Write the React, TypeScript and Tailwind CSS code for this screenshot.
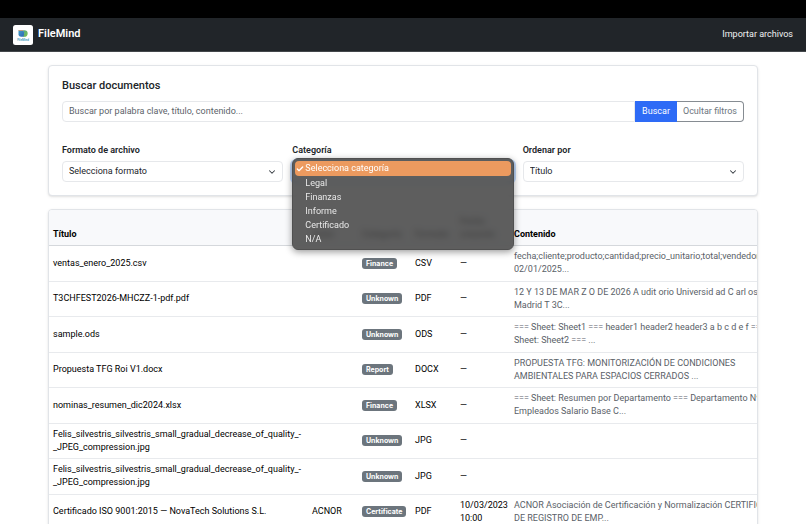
import React, { useState } from 'react';
import { Check, ChevronDown } from 'lucide-react';

const categories = ['Selecciona categoría', 'Legal', 'Finanzas', 'Informe', 'Certificado', 'N/A'];

const documents = [
  {
    title: 'ventas_enero_2025.csv',
    author: '',
    category: 'Finance',
    format: 'CSV',
    date: '—',
    content: 'fecha;cliente;producto;cantidad;precio_unitario;total;vendedor\n02/01/2025...',
  },
  {
    title: 'T3CHFEST2026-MHCZZ-1-pdf.pdf',
    author: '',
    category: 'Unknown',
    format: 'PDF',
    date: '—',
    content: '12 Y 13 DE MAR Z O DE 2026 A udit orio Universid ad C arl os\nMadrid T 3C...',
  },
  {
    title: 'sample.ods',
    author: '',
    category: 'Unknown',
    format: 'ODS',
    date: '—',
    content: '=== Sheet: Sheet1 === header1 header2 header3 a b c d e f ===\nSheet: Sheet2 === ...',
  },
  {
    title: 'Propuesta TFG Roi V1.docx',
    author: '',
    category: 'Report',
    format: 'DOCX',
    date: '—',
    content: 'PROPUESTA TFG: MONITORIZACIÓN DE CONDICIONES\nAMBIENTALES PARA ESPACIOS CERRADOS ...',
  },
  {
    title: 'nominas_resumen_dic2024.xlsx',
    author: '',
    category: 'Finance',
    format: 'XLSX',
    date: '—',
    content: '=== Sheet: Resumen por Departamento === Departamento Nº\nEmpleados Salario Base C...',
  },
  {
    title: 'Felis_silvestris_silvestris_small_gradual_decrease_of_quality_-_JPEG_compression.jpg',
    author: '',
    category: 'Unknown',
    format: 'JPG',
    date: '—',
    content: '',
  },
  {
    title: 'Felis_silvestris_silvestris_small_gradual_decrease_of_quality_-_JPEG_compression.jpg',
    author: '',
    category: 'Unknown',
    format: 'JPG',
    date: '—',
    content: '',
  },
  {
    title: 'Certificado ISO 9001:2015 — NovaTech Solutions S.L.',
    author: 'ACNOR',
    category: 'Certificate',
    format: 'PDF',
    date: '10/03/2023 10:00',
    content: 'ACNOR Asociación de Certificación y Normalización CERTIFICADO\nDE REGISTRO DE EMP...',
  },
];

function Logo() {
  return (
    <svg viewBox="0 0 20 20" className="h-5 w-5" aria-hidden="true">
      <defs>
        <linearGradient id="page" x1="0" y1="0" x2="1" y2="1">
          <stop offset="0" stopColor="#3f9fc4" />
          <stop offset="1" stopColor="#2f62b8" />
        </linearGradient>
        <linearGradient id="leaf" x1="0" y1="0" x2="1" y2="1">
          <stop offset="0" stopColor="#4fa98a" />
          <stop offset="1" stopColor="#7fc04a" />
        </linearGradient>
      </defs>
      <rect width="20" height="20" rx="2.5" fill="#fff" />
      <path d="M5.5 5.2h4.3l1.6 1.5v5.1H8.2c-1.8 0-2.7-1-2.7-2.5z" fill="url(#page)" />
      <path d="M9.8 5.2h1.6c2.1 0 3.3 1.2 3.3 3.2s-1.2 3.4-3.3 3.4H9.9c.9-.8 1.2-1.8 1.2-3.2 0-1.5-.4-2.5-1.3-3.4z" fill="url(#leaf)" />
      <path d="M5.5 5.2h4.3l.8.8H5.5z" fill="#e09a6a" />
      <text x="10" y="15.6" textAnchor="middle" fontSize="3" fontWeight="700" fill="#4a9ec0">
        FileMind
      </text>
    </svg>
  );
}

function SelectField({ id, label, options }: { id: string; label: string; options: string[] }) {
  return (
    <div className="flex flex-col gap-1">
      <label htmlFor={id} className="font-semibold leading-[14px]">
        {label}
      </label>
      <div className="relative flex items-center">
        <select
          id={id}
          className="h-[21px] w-full appearance-none rounded-[4px] border border-[#e6e8eb] bg-white px-1.5 text-[#212529]"
        >
          {options.map((option) => (
            <option key={option}>{option}</option>
          ))}
        </select>
        <ChevronDown className="pointer-events-none absolute right-1.5 h-2.5 w-2.5 text-[#343a40]" strokeWidth={2.5} />
      </div>
    </div>
  );
}

function CategoryField() {
  const [open, setOpen] = useState(true);
  const [selected, setSelected] = useState(categories[0]);

  return (
    <div className="relative flex flex-col gap-1">
      <label htmlFor="category" className="font-semibold leading-[14px]">
        Categoría
      </label>
      <button
        id="category"
        type="button"
        aria-haspopup="listbox"
        aria-expanded={open}
        onClick={() => setOpen(!open)}
        className="flex h-[21px] items-center justify-between rounded-[4px] border border-[#86b7fe] px-1.5 ring-2 ring-[#c2dbfe]"
      >
        {open ? '' : selected}
      </button>
      {open && (
        <ul
          role="listbox"
          aria-label="Categoría"
          className="absolute inset-x-0 top-[15px] z-10 rounded-[6px] border border-[#505050] bg-[#4c4c4c]/90 p-0.5 text-[#e8e8e8] shadow-[0_2px_7px_rgba(0,0,0,0.4)] backdrop-blur-[3px]"
        >
          {categories.map((category) => (
            <li
              key={category}
              role="option"
              aria-selected={category === selected}
              onClick={() => {
                setSelected(category);
                setOpen(false);
              }}
              className="flex h-[14px] cursor-default items-center rounded-[4px] first:mb-px first:h-[15px] aria-selected:bg-[#ec9a5f] aria-selected:text-white"
            >
              <span className="flex w-2.5 justify-center">
                {category === selected && <Check className="h-2 w-2" strokeWidth={4} />}
              </span>
              {category}
            </li>
          ))}
        </ul>
      )}
    </div>
  );
}

function SearchPanel() {
  return (
    <section className="rounded-[4px] border border-[#e1e4e8] bg-white p-[13px] shadow-sm">
      <h1 className="text-[11px] font-medium leading-[14px]">Buscar documentos</h1>
      <form className="mt-2 flex h-[21px]" onSubmit={(e) => e.preventDefault()}>
        <input
          type="text"
          aria-label="Buscar documentos"
          placeholder="Buscar por palabra clave, título, contenido..."
          className="min-w-0 flex-1 rounded-l-[4px] border border-[#e6e8eb] px-1.5 placeholder:text-[#5c636a]"
        />
        <button type="submit" className="bg-[#2e6bf6] px-[7px] text-white">
          Buscar
        </button>
        <button type="button" className="rounded-r-[4px] border border-l-0 border-[#868c92] px-1.5 text-[#6c757d]">
          Ocultar filtros
        </button>
      </form>
      <div className="mt-[21px] grid grid-cols-3 gap-[9px]">
        <SelectField id="format" label="Formato de archivo" options={['Selecciona formato', 'PDF', 'DOCX', 'CSV']} />
        <CategoryField />
        <SelectField id="order" label="Ordenar por" options={['Título', 'Fecha']} />
      </div>
    </section>
  );
}

function DocumentsTable() {
  return (
    <section className="overflow-hidden rounded-[4px] border border-[#e1e4e8] bg-white shadow-sm">
      <table className="w-full min-w-[731px] table-fixed border-collapse text-left leading-[13px] text-black">
        <colgroup>
          <col className="w-[259px]" />
          <col className="w-[50px]" />
          <col className="w-[53px]" />
          <col className="w-[45px]" />
          <col className="w-[54px]" />
          <col />
        </colgroup>
        <thead>
          <tr className="h-[35px] border-b border-[#d5d8dc] bg-[#f8f9fb] align-bottom">
            <th className="px-1 pb-1 font-bold">Título</th>
            <th className="px-1 pb-1 font-bold">Autor</th>
            <th className="px-1 pb-1 font-bold">Categoría</th>
            <th className="px-1 pb-1 font-bold">Formato</th>
            <th className="px-1 pb-1 font-bold">Fecha creación</th>
            <th className="px-1 pb-1 font-bold">Contenido</th>
          </tr>
        </thead>
        <tbody>
          {documents.map((doc, index) => (
            <tr key={index} className="border-b border-[#e8eaed] odd:h-9 even:h-[35px]">
              <td className="px-1">{doc.title}</td>
              <td className="px-1">{doc.author}</td>
              <td className="px-1">
                <span className="inline-block rounded-[3px] bg-[#6c757d] px-1 font-['Inter'] text-[7px] font-bold leading-[11px] text-white">
                  {doc.category}
                </span>
              </td>
              <td className="px-1">{doc.format}</td>
              <td className="px-1">{doc.date}</td>
              <td className="px-1 whitespace-pre text-[#5a6168]">{doc.content}</td>
            </tr>
          ))}
        </tbody>
      </table>
    </section>
  );
}

export default function App() {
  return (
    <div className="h-screen overflow-hidden bg-white font-['Roboto','Liberation_Sans',sans-serif] text-[9px] text-[#212529]">
      <div className="h-[18px] bg-black" />
      <nav className="flex h-[34px] items-center justify-between border-b border-[#43474b] bg-[#212529] px-[13px] text-white">
        <a href="#" className="flex items-center gap-[5px] text-[11px] font-semibold">
          <Logo />
          FileMind
        </a>
        <a href="#importar" className="text-[#f1f2f3]">
          Importar archivos
        </a>
      </nav>
      <main className="flex flex-col gap-[13px] px-12 pt-[13px]">
        <SearchPanel />
        <DocumentsTable />
      </main>
    </div>
  );
}
